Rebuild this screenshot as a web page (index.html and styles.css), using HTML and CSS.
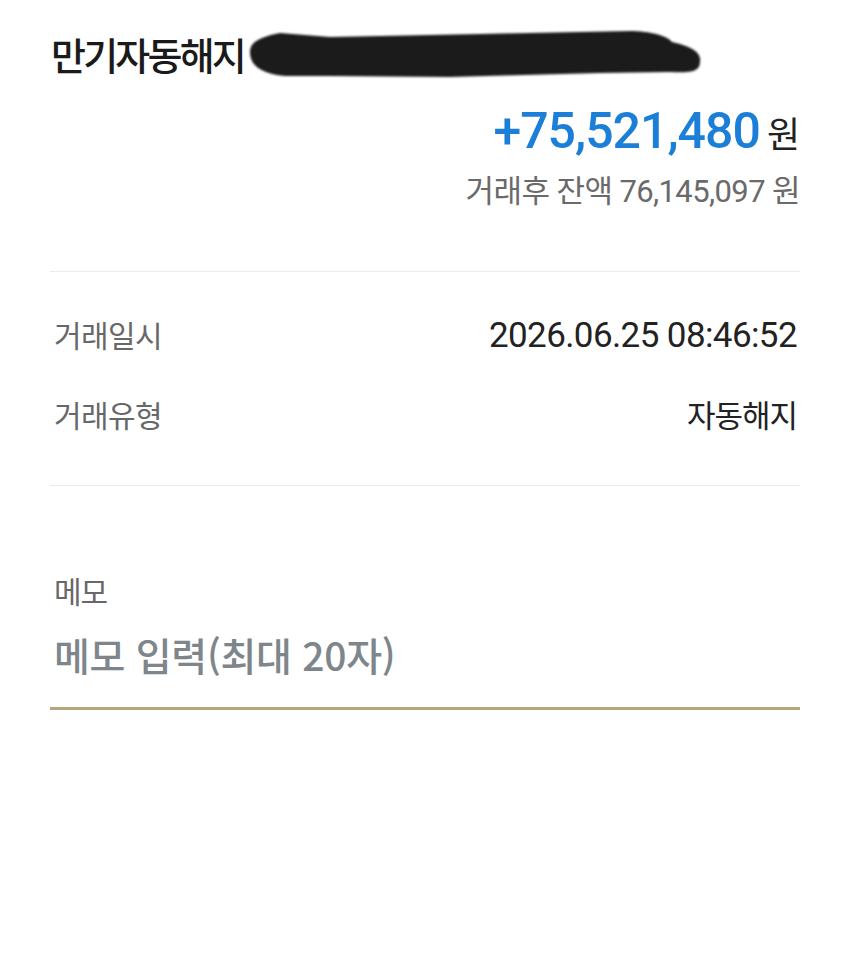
FILE: index.html
```html
<!DOCTYPE html>
<html lang="ko">
<head>
<meta charset="utf-8">
<title>거래 상세</title>
<link rel="stylesheet" href="styles.css">
</head>
<body>
<main class="page">
  <header class="head">
    <h1 class="title">만기자동해지</h1>
    <svg class="redact" width="470" height="70" viewBox="0 0 470 70" aria-hidden="true">
      <path d="M 10 32 C 10 20, 25 16, 40 13 L 90 17 L 240 14 L 390 11 C 410 11, 428 16, 432 22 C 450 26, 462 32, 460 42 C 460 52, 450 53, 430 52 L 360 53 L 210 57 L 90 56 L 45 56 C 22 54, 10 46, 10 32 Z" fill="#1b1b1b"/>
    </svg>
  </header>

  <div class="amount-row">
    <span class="amount">+75,521,480</span><span class="won-lg">원</span>
  </div>
  <div class="balance">거래후 잔액 <span class="num">76,145,097</span> 원</div>

  <hr class="divider top-div">

  <dl class="info">
    <div class="info-row">
      <dt class="label">거래일시</dt>
      <dd class="value date">2026.06.25 08:46:52</dd>
    </div>
    <div class="info-row second">
      <dt class="label">거래유형</dt>
      <dd class="value">자동해지</dd>
    </div>
  </dl>

  <hr class="divider bottom-div">

  <section class="memo">
    <div class="memo-label">메모</div>
    <div class="memo-input"><span class="memo-text">메모 입력(최대 20자)</span></div>
  </section>
</main>
</body>
</html>
```

FILE: styles.css
```css
html, body {
  margin: 0;
  padding: 0;
  background: #ffffff;
}

body {
  font-family: Roboto, "Noto Sans CJK KR", sans-serif;
  color: #1e1e1e;
}

.page {
  padding: 0 50px;
}

.head {
  position: relative;
  padding-top: 29px;
}

.title {
  margin: 0;
  padding-left: 1px;
  font-family: "Noto Sans CJK KR", sans-serif;
  font-size: 38px;
  font-weight: 500;
  line-height: 50px;
  letter-spacing: -2.8px;
  color: #1a1a1a;
}

.redact {
  position: absolute;
  left: 190px;
  top: 20px;
  filter: blur(1px);
}

.amount-row {
  margin-top: 22px;
  display: flex;
  justify-content: flex-end;
  align-items: baseline;
  line-height: 60px;
}

.amount {
  font-family: Roboto, sans-serif;
  font-size: 50px;
  font-weight: 500;
  letter-spacing: -1px;
  color: #1b7fd8;
}

.won-lg {
  margin-left: 7px;
  font-family: "Noto Sans CJK KR", sans-serif;
  font-size: 36px;
  font-weight: 400;
  color: #222;
}

.balance {
  margin-top: 10px;
  text-align: right;
  font-family: Roboto, "Noto Sans CJK KR", sans-serif;
  font-size: 31px;
  line-height: 40px;
  letter-spacing: -0.6px;
  color: #6a6a6a;
}

.divider {
  margin: 0;
  border: 0;
  height: 1px;
  background: #ebebeb;
}

.top-div {
  margin-top: 59px;
}

.info {
  margin: 42px 0 0;
}

.info-row {
  display: flex;
  justify-content: space-between;
  align-items: baseline;
  line-height: 40px;
}

.info-row.second {
  margin-top: 38px;
}

.label {
  padding-left: 4px;
  font-family: "Noto Sans CJK KR", sans-serif;
  font-size: 30px;
  letter-spacing: -0.6px;
  color: #686868;
}

.value {
  margin: 0;
  padding-right: 3px;
  font-family: "Noto Sans CJK KR", sans-serif;
  font-size: 31px;
  letter-spacing: -1px;
  color: #222;
}

.value.date {
  font-family: Roboto, sans-serif;
  font-size: 35px;
  letter-spacing: -0.6px;
}

.bottom-div {
  margin-top: 51px;
}

.memo {
  margin-top: 86px;
}

.memo-label {
  padding-left: 4px;
  font-family: "Noto Sans CJK KR", sans-serif;
  font-size: 30px;
  line-height: 36px;
  letter-spacing: -1px;
  color: #686868;
}

.memo-input {
  margin-top: 23px;
  padding-bottom: 18px;
  border-bottom: 3px solid #b6a67e;
  line-height: 46px;
}

.memo-text {
  padding-left: 4px;
  font-family: "Noto Sans CJK KR", Roboto, sans-serif;
  font-size: 39px;
  font-weight: 500;
  letter-spacing: -0.3px;
  color: #7e868b;
}
```
